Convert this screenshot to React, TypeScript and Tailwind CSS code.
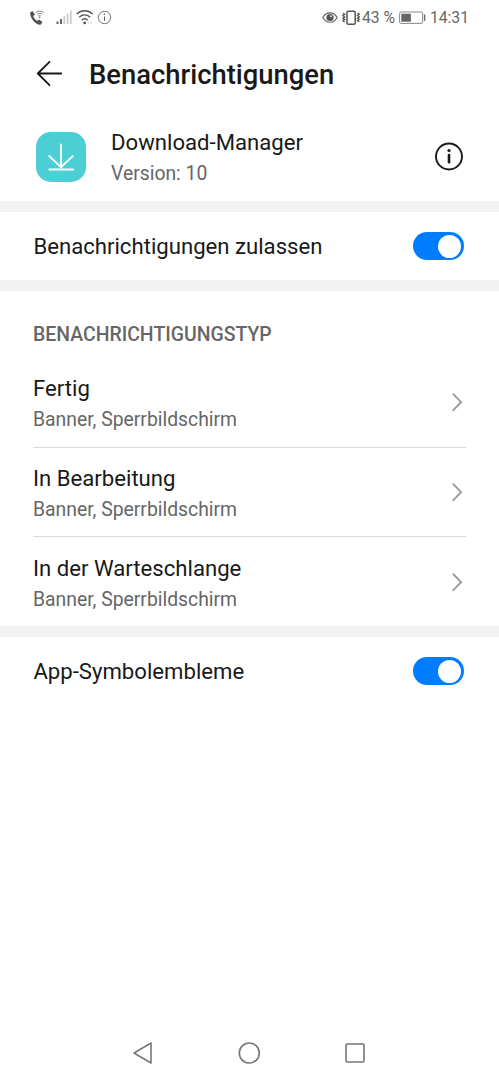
import React from 'react';

const CHANNELS = [
  { name: 'Fertig', detail: 'Banner, Sperrbildschirm' },
  { name: 'In Bearbeitung', detail: 'Banner, Sperrbildschirm' },
  { name: 'In der Warteschlange', detail: 'Banner, Sperrbildschirm' },
];

const StatusBar: React.FC = () => (
  <div className="h-9 flex items-center justify-between pl-[29px] pr-[31px] text-[#666]">
    {/* Call, signal, wifi, info */}
    <div className="flex items-center">
      <svg width="16" height="18" viewBox="0 0 16 18" fill="none">
        <path d="M1.3 3.2 3.5 2l2.4 3.6-1.6 1.6c.8 2 2.1 3.6 3.9 4.5l1.9-1.3 3.4 2.7-1.6 2.3c-1.4.8-4.2-.2-6.7-2.7C2.6 10 .6 6 1.3 3.2Z" fill="#555" />
        <path d="M6.6 3.5c2.4-1.9 5.6-1.9 8 0M8 5.3c1.6-1.2 3.6-1.2 5.2 0M9.3 7c.9-.6 1.7-.6 2.6 0" stroke="#777" strokeWidth=".9" />
        <circle cx="10.6" cy="8.3" r=".8" fill="#666" />
      </svg>
      <svg className="ml-[11px]" width="17" height="18" viewBox="0 0 17 18">
        <path d="M.5 12.5h2V15h-2zM4 10h2v5H4z" fill="#666" />
        <path d="M7.5 7h1.8v8H7.5zM10.7 4.5h1.8V15h-1.8zM13.9 1.5h1.8V15h-1.8z" fill="#ccc" />
      </svg>
      <svg className="ml-[3px]" width="18" height="18" viewBox="0 0 18 18" fill="none" stroke="#555" strokeWidth="1.5">
        <path d="M.8 5C5.4.8 12 .8 16.6 5M3.2 8.2c3.3-2.9 7.7-2.9 11 0M5.7 11.1c1.8-1.6 4.2-1.6 6 0" />
        <circle cx="8.7" cy="13.9" r="1.4" fill="#555" stroke="none" />
        <path d="m12.6 12-1.2 1.4 1.2 1.4m2-2.8 1.2 1.4-1.2 1.4" stroke="#ccc" strokeWidth=".8" />
      </svg>
      <svg className="ml-[3px]" width="15" height="18" viewBox="0 0 15 18" fill="none" stroke="#666">
        <circle cx="7.5" cy="8.5" r="6.2" strokeWidth=".9" />
        <path d="M7.5 7.4V12" strokeWidth="1.1" />
        <circle cx="7.5" cy="5.3" r=".8" fill="#666" stroke="none" />
      </svg>
    </div>
    {/* Eye comfort, vibrate, battery, clock */}
    <div className="flex items-center">
      <svg width="16" height="18" viewBox="0 0 16 18" fill="none" stroke="#666" strokeWidth="1.2">
        <path d="M.8 8.5C4.5 2.2 11.5 2.2 15.2 8.5 11.5 14.8 4.5 14.8.8 8.5Z" />
        <circle cx="8" cy="8.5" r="3.6" fill="#555" stroke="none" />
        <circle cx="9" cy="7.2" r=".9" fill="#fff" stroke="none" />
      </svg>
      <svg className="ml-[3px]" width="20" height="18" viewBox="0 0 20 18" fill="none" stroke="#555">
        <rect x="6" y="2.2" width="8.2" height="13" rx="1.3" strokeWidth="1.5" />
        <path d="m2 4 1.6 1.3L2 6.6l1.6 1.3L2 9.2l1.6 1.3L2 11.8 3.6 13M16.6 4l1.6 1.3-1.6 1.3 1.6 1.3-1.6 1.3 1.6 1.3-1.6 1.3 1.6 1.2" strokeWidth="1.4" />
      </svg>
      <span className="ml-px text-[15.7px] leading-[18px] whitespace-nowrap">43 %</span>
      <svg className="ml-[4px]" width="27" height="18" viewBox="0 0 27 18" fill="none">
        <rect x=".6" y="3" width="23" height="11.4" rx="1.5" stroke="#888" />
        <path d="M2.3 4.7h9.6v8H2.3z" fill="#666" />
        <path d="M25.6 5.5v6.4" stroke="#666" strokeWidth="1.4" />
      </svg>
      <span className="ml-[4px] -mr-px text-[15.7px] leading-[18px]">14:31</span>
    </div>
  </div>
);

const Toggle: React.FC = () => (
  <div className="w-[51px] h-7 rounded-full bg-[#007dff] flex items-center justify-end pr-[3px]">
    <div className="size-[23px] rounded-full bg-white"></div>
  </div>
);

const SwitchRow: React.FC<{ label: string }> = ({ label }) => (
  <div className="h-[68px] flex items-center justify-between pl-[33.4px] pr-[35.5px]">
    <span className="pt-px text-[22.15px] text-[#191919]">{label}</span>
    <Toggle />
  </div>
);

const Divider: React.FC = () => <div className="h-[11px] bg-[#f2f2f2]"></div>;

const App: React.FC = () => {
  return (
    <div className="w-full h-screen flex flex-col bg-white overflow-hidden font-['Roboto',sans-serif]">
      <StatusBar />

      {/* Title */}
      <header className="h-[76px] flex items-center pl-9">
        <svg width="27" height="28" viewBox="0 0 27 28" fill="none" stroke="#191919" strokeWidth="1.8" strokeLinecap="round" strokeLinejoin="round">
          <path d="M13.5 1.8 1.8 13.5l11.7 11.7M1.8 13.5h23.4" />
        </svg>
        <h1 className="ml-[26px] pt-[2px] text-[27.4px] leading-8 font-medium text-[#191919]">Benachrichtigungen</h1>
      </header>

      {/* App info */}
      <section className="h-[89px] flex items-center pl-9 pr-[35px]">
        <svg width="50" height="50" viewBox="0 0 50 50" fill="none">
          <rect width="50" height="50" rx="15" fill="#4bced4" />
          <path d="M25 12.5v22M13.2 24 25 35.2 36.8 24M13.2 37.5h24" stroke="#fff" strokeWidth="1.8" strokeLinecap="round" />
        </svg>
        <div className="ml-[25px] pt-[2px] flex-1">
          <p className="text-[22.15px] leading-8 text-[#191919]">Download-Manager</p>
          <p className="text-[19.35px] leading-[31px] text-[#666]">Version: 10</p>
        </div>
        <svg width="30" height="30" viewBox="0 0 30 30" fill="none" stroke="#191919">
          <circle cx="15" cy="14.5" r="13" strokeWidth="1.9" />
          <path d="M15 13.1v7.2" strokeWidth="2.6" strokeLinecap="round" />
          <circle cx="15" cy="8.5" r="1.6" fill="#191919" stroke="none" />
        </svg>
      </section>

      <Divider />
      <SwitchRow label="Benachrichtigungen zulassen" />
      <Divider />

      {/* Notification channels */}
      <section className="h-[335px] px-[33px]">
        <h2 className="h-[67px] pt-[29px] text-[19.45px] leading-[30px] font-medium text-[#666]">BENACHRICHTIGUNGSTYP</h2>
        {CHANNELS.map((channel) => (
          <div
            key={channel.name}
            className="h-[89.5px] flex items-center justify-between border-b border-[#d9d9d9] last:border-b-0"
          >
            <div className="pt-[3px]">
              <p className="text-[22.15px] leading-8 text-[#191919]">{channel.name}</p>
              <p className="text-[19.35px] leading-[31px] text-[#666]">{channel.detail}</p>
            </div>
            <svg className="mr-[2px]" width="13" height="20" viewBox="0 0 13 20" fill="none" stroke="#999" strokeWidth="1.9" strokeLinecap="round">
              <path d="m2.3 2.2 7.8 8-7.8 8" />
            </svg>
          </div>
        ))}
      </section>

      <Divider />
      <SwitchRow label="App-Symbolembleme" />

      {/* System navigation */}
      <nav className="mt-auto h-[54px] flex items-center justify-between pl-[132px] pr-[133px]">
        <svg width="22" height="24" viewBox="0 0 22 24" fill="none" stroke="#777" strokeWidth="1.6" strokeLinejoin="round">
          <path d="M19 2v20L2 12Z" />
        </svg>
        <svg width="24" height="24" viewBox="0 0 24 24" fill="none" stroke="#777" strokeWidth="1.6">
          <circle cx="12.3" cy="12" r="10" />
        </svg>
        <svg width="22" height="24" viewBox="0 0 22 24" fill="none" stroke="#777" strokeWidth="1.6">
          <rect x="2" y="3" width="18" height="18" rx="1" />
        </svg>
      </nav>
    </div>
  );
};

export default App;
